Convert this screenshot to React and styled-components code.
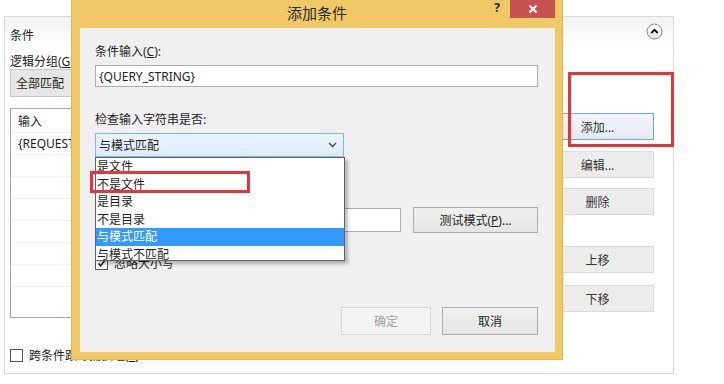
import React from 'react'
import styled, { createGlobalStyle } from 'styled-components'

const GlobalStyle = createGlobalStyle`
  body {
    margin: 0;
    background: #fff;
    font-family: "Noto Sans", "Noto Sans CJK SC", sans-serif;
    font-size: 12px;
    color: #1e1e1e;
  }
`

const Page = styled.div`
  position: relative;
  width: 724px;
  height: 384px;
  overflow: hidden;
  padding: 16px 0 0 4px;
  box-sizing: border-box;
`

/* ---------- background panel ---------- */

const Panel = styled.section`
  width: 670px;
  height: 358px;
  border: 1px solid #dadada;
  box-sizing: border-box;
  display: flex;
  flex-direction: column;
`

const PanelHeader = styled.div`
  height: 32px;
  box-sizing: border-box;
  padding: 3px 10px 0 5px;
  display: flex;
  align-items: center;
  justify-content: space-between;
  background: linear-gradient(#f2f2f2, #fff);
`

const Collapse = styled.svg`
  margin-top: -7px;
`

const PanelBody = styled.div`
  display: grid;
  grid-template-columns: 1fr 113px;
  column-gap: 20px;
  padding: 0 19px 0 5px;
`

const LeftCol = styled.div`
  display: flex;
  flex-direction: column;
`

const Label = styled.div`
  line-height: 16px;
  margin-top: ${p => p.$mt || 0}px;
  white-space: nowrap;
`

const Key = styled.span`
  text-decoration: underline;
`

const GroupSelect = styled.div`
  margin-top: -1px;
  height: 28px;
  width: 220px;
  box-sizing: border-box;
  border: 1px solid #c8c8c8;
  background: #e6e6e6;
  display: flex;
  align-items: center;
  padding-left: 5px;
`

const ListBox = styled.div`
  margin-top: 11px;
  height: 210px;
  border: 1px solid #a6a6a6;
  background: #fff;
  box-sizing: border-box;
`

const ListRow = styled.div`
  height: 21px;
  line-height: 21px;
  padding-left: 7px;
  border-bottom: 1px solid #f1f1f1;
  &:first-child { margin-top: 2px; }
`

const RightCol = styled.div`
  display: flex;
  flex-direction: column;
  padding-top: 64px;
`

const SideButton = styled.div`
  height: 27px;
  box-sizing: border-box;
  margin-top: ${p => p.$mt || 0}px;
  border: 1px solid ${p => (p.$active ? '#6fa4d8' : '#dadada')};
  background: ${p => (p.$active ? 'linear-gradient(#f2f6fa, #e3eaf2)' : '#ececec')};
  display: flex;
  align-items: center;
  justify-content: center;
  color: #333;
`

const PanelFooter = styled.div`
  margin-top: auto;
  padding: 0 0 9px 5px;
  display: flex;
  align-items: center;
  gap: 6px;
`

const Box = styled.span`
  width: 13px;
  height: 13px;
  box-sizing: border-box;
  border: 1px solid #555;
  background: #fff;
  display: inline-flex;
  align-items: center;
  justify-content: center;
`

/* ---------- dialog window ---------- */

const Dialog = styled.div`
  position: absolute;
  left: 71px;
  top: 0;
  width: 492px;
  height: 360px;
  background: #f0c866;
  box-shadow: inset 1px 0 0 #e2b655, inset -1px 0 0 #e2b655, inset 0 -1px 0 #e2b655;
  display: flex;
  flex-direction: column;
  z-index: 2;
`

const TitleBar = styled.div`
  height: 28px;
  display: grid;
  grid-template-columns: 1fr auto 1fr;
  align-items: start;
`

const Title = styled.div`
  grid-column: 2;
  font-size: 15px;
  line-height: 26px;
  color: #2a2a2a;
`

const Controls = styled.div`
  grid-column: 3;
  display: flex;
  justify-content: flex-end;
  align-items: flex-start;
  padding-right: 8px;
`

const Help = styled.span`
  font-size: 12px;
  font-weight: bold;
  line-height: 16px;
  margin-right: 10px;
  color: #222;
`

const Close = styled.div`
  width: 45px;
  height: 18px;
  background: #c75050;
  display: flex;
  align-items: center;
  justify-content: center;
`

const Content = styled.div`
  position: relative;
  flex: 1;
  margin: 0 8px 8px 9px;
  background: #f0f0f0;
  padding: 0 17px 17px 15px;
  display: flex;
  flex-direction: column;
`

const TextInput = styled.div`
  margin-top: ${p => p.$mt || 0}px;
  height: ${p => p.$h || 22}px;
  width: ${p => (p.$w ? `${p.$w}px` : '100%')};
  box-sizing: border-box;
  border: 1px solid #abadb3;
  background: #fff;
  padding-left: 3px;
  display: flex;
  align-items: center;
`

const Select = styled.div`
  margin-top: 5px;
  height: 24px;
  width: 249px;
  box-sizing: border-box;
  border: 1px solid #7eb4ea;
  background: linear-gradient(#ecf4fc, #dcecfc);
  padding: 0 6px 0 3px;
  display: flex;
  align-items: center;
  justify-content: space-between;
  position: relative;
  z-index: 2;
`

const Row = styled.div`
  margin-top: ${p => p.$mt || 0}px;
  display: flex;
  align-items: center;
  gap: 12px;
`

const Button = styled.div`
  height: ${p => p.$h || 26}px;
  width: ${p => p.$w}px;
  box-sizing: border-box;
  border: 1px solid ${p => (p.$disabled ? '#d9d9d9' : '#acacac')};
  background: ${p => (p.$disabled ? '#f4f4f4' : 'linear-gradient(#f0f0f0, #e5e5e5)')};
  color: ${p => (p.$disabled ? '#a2a2a2' : '#1e1e1e')};
  display: flex;
  align-items: center;
  justify-content: center;
`

const CheckRow = styled.div`
  margin-top: 21px;
  display: flex;
  align-items: center;
  gap: 6px;
`

const Footer = styled.div`
  margin-top: auto;
  display: flex;
  justify-content: flex-end;
  gap: 11px;
`

const DropList = styled.ul`
  position: absolute;
  left: 15px;
  top: 129px;
  width: 250px;
  height: 104px;
  margin: 0;
  padding: 0;
  list-style: none;
  box-sizing: border-box;
  border: 1px solid #646464;
  background: #fff;
  overflow: hidden;
  box-shadow: 3px 3px 3px rgba(0, 0, 0, 0.25);
  z-index: 1;
`

const DropItem = styled.li`
  height: 17.5px;
  line-height: 17.5px;
  padding-left: 1px;
  background: ${p => (p.$selected ? '#3399ff' : 'transparent')};
  color: ${p => (p.$selected ? '#fff' : '#1e1e1e')};
`

/* ---------- red annotations ---------- */

const Mark = styled.div`
  position: absolute;
  left: ${p => p.$x}px;
  top: ${p => p.$y}px;
  width: ${p => p.$w}px;
  height: ${p => p.$h}px;
  box-sizing: border-box;
  border: 3px solid #e6343c;
  z-index: 3;
`

const Chevron = () => (
  <svg width="9" height="6" viewBox="0 0 9 6">
    <path d="M1 1 L4.5 4.5 L8 1" fill="none" stroke="#444" strokeWidth="1.4" />
  </svg>
)

const Tick = () => (
  <svg width="9" height="9" viewBox="0 0 9 9">
    <path d="M1.5 4.5 L3.6 6.8 L7.6 1.8" fill="none" stroke="#222" strokeWidth="1.6" />
  </svg>
)

const options = ['是文件', '不是文件', '是目录', '不是目录', '与模式匹配', '与模式不匹配']

export default function App() {
  return (
    <Page>
      <GlobalStyle />
      <Panel>
        <PanelHeader>
          <span>条件</span>
          <Collapse width="17" height="17" viewBox="0 0 17 17">
            <defs>
              <linearGradient id="cg" x1="0" y1="0" x2="0" y2="1">
                <stop offset="0" stopColor="#ffffff" />
                <stop offset="1" stopColor="#e4e4e4" />
              </linearGradient>
            </defs>
            <circle cx="8.5" cy="8.5" r="7.5" fill="url(#cg)" stroke="#8a8a8a" />
            <path d="M5.3 10 L8.5 6.8 L11.7 10" fill="none" stroke="#111" strokeWidth="1.8" />
          </Collapse>
        </PanelHeader>
        <PanelBody>
          <LeftCol>
            <Label $mt={5}>逻辑分组(<Key>G</Key>):</Label>
            <GroupSelect>全部匹配</GroupSelect>
            <ListBox>
              <ListRow>输入</ListRow>
              <ListRow>{'{REQUEST_FILENAME}'}</ListRow>
              <ListRow />
              <ListRow />
              <ListRow />
              <ListRow />
              <ListRow />
              <ListRow />
            </ListBox>
          </LeftCol>
          <RightCol>
            <SideButton $active>添加...</SideButton>
            <SideButton $mt={11}>编辑...</SideButton>
            <SideButton $mt={10}>删除</SideButton>
            <SideButton $mt={31}>上移</SideButton>
            <SideButton $mt={12}>下移</SideButton>
          </RightCol>
        </PanelBody>
        <PanelFooter>
          <Box />
          <span>跨条件跟踪捕获组(<Key>T</Key>)</span>
        </PanelFooter>
      </Panel>

      <Dialog>
        <TitleBar>
          <Title>添加条件</Title>
          <Controls>
            <Help>?</Help>
            <Close>
              <svg width="10" height="10" viewBox="0 0 10 10">
                <path d="M1.5 1.5 L8.5 8.5 M8.5 1.5 L1.5 8.5" stroke="#fff" strokeWidth="2" />
              </svg>
            </Close>
          </Controls>
        </TitleBar>
        <Content>
          <Label $mt={16}>条件输入(<Key>C</Key>):</Label>
          <TextInput $mt={5}>{'{QUERY_STRING}'}</TextInput>
          <Label $mt={25}>检查输入字符串是否:</Label>
          <Select>
            <span>与模式匹配</span>
            <Chevron />
          </Select>
          <Row $mt={50}>
            <TextInput $w={306} $h={24} />
            <Button $w={125}>测试模式(<Key>P</Key>)...</Button>
          </Row>
          <CheckRow>
            <Box><Tick /></Box>
            <span>忽略大小写</span>
          </CheckRow>
          <Footer>
            <Button $w={90} $h={28} $disabled>确定</Button>
            <Button $w={96} $h={28}>取消</Button>
          </Footer>
          <DropList>
            {options.map(o => (
              <DropItem key={o} $selected={o === '与模式匹配'}>{o}</DropItem>
            ))}
          </DropList>
        </Content>
      </Dialog>

      <Mark $x={568} $y={72} $w={106} $h={75} />
      <Mark $x={90} $y={171} $w={160} $h={22} />
    </Page>
  )
}
